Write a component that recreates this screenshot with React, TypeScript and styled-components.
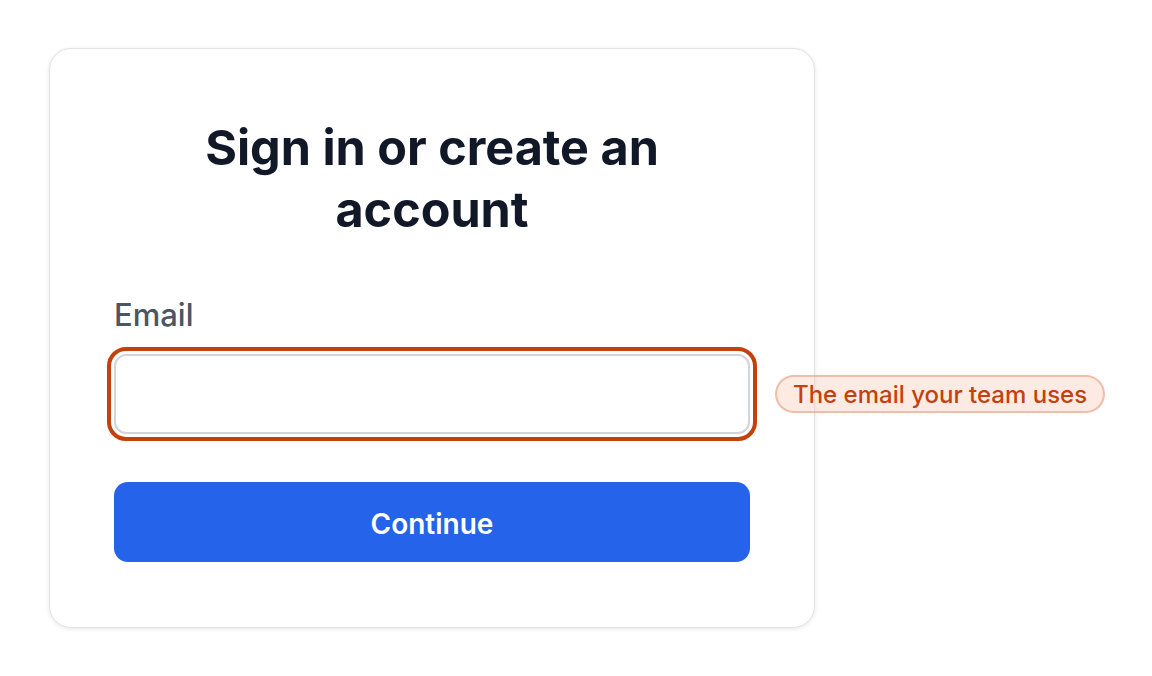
import styled, { createGlobalStyle } from "styled-components";

const GlobalStyle = createGlobalStyle`
  body {
    margin: 0;
    background: #ffffff;
    font-family: Inter, "Noto Sans", "Liberation Sans", sans-serif;
  }
`;

const Page = styled.div`
  padding: 48px 49px;
`;

const Card = styled.div`
  width: 766px;
  box-sizing: border-box;
  padding: 68px 64px 65px;
  background: #ffffff;
  border: 1px solid #e2e4e8;
  border-radius: 22px;
  box-shadow: 0 1px 4px rgba(17, 24, 39, 0.1);
`;

const Title = styled.h1`
  margin: 0 auto;
  max-width: 540px;
  text-align: center;
  font-size: 48.5px;
  line-height: 62px;
  font-weight: 700;
  color: #111827;
`;

const Field = styled.div`
  margin-top: 54px;
  display: flex;
  flex-direction: column;
  gap: 19px;
`;

const Label = styled.label`
  font-size: 31px;
  line-height: 40px;
  font-weight: 500;
  color: #4b5563;
`;

const InputWrap = styled.div`
  position: relative;
`;

const Input = styled.input`
  display: block;
  width: 100%;
  height: 80px;
  box-sizing: border-box;
  border: 2px solid #d1d5db;
  border-radius: 12px;
  outline: 4px solid #c2410c;
  outline-offset: 3px;
  font: inherit;
  font-size: 26px;
  padding: 0 20px;
  background: #ffffff;
`;

const Hint = styled.span`
  position: absolute;
  left: calc(100% + 25px);
  top: 50%;
  transform: translateY(-50%);
  box-sizing: border-box;
  white-space: nowrap;
  padding: 0 16px;
  height: 38px;
  display: flex;
  align-items: center;
  border-radius: 19px;
  border: 2px solid rgba(226, 143, 110, 0.5);
  background: rgba(245, 195, 175, 0.35);
  color: #c2410c;
  font-size: 24px;
  font-weight: 500;
`;

const Button = styled.button`
  margin-top: 48px;
  display: block;
  width: 100%;
  height: 80px;
  padding: 4px 0 0;
  border: none;
  border-radius: 14px;
  background: #2563eb;
  color: #ffffff;
  font: inherit;
  font-size: 28px;
  font-weight: 600;
`;

export default function App() {
  return (
    <>
      <GlobalStyle />
      <Page>
        <Card>
          <Title>Sign in or create an account</Title>
          <Field>
            <Label htmlFor="email">Email</Label>
            <InputWrap>
              <Input id="email" type="email" />
              <Hint>The email your team uses</Hint>
            </InputWrap>
          </Field>
          <Button>Continue</Button>
        </Card>
      </Page>
    </>
  );
}
